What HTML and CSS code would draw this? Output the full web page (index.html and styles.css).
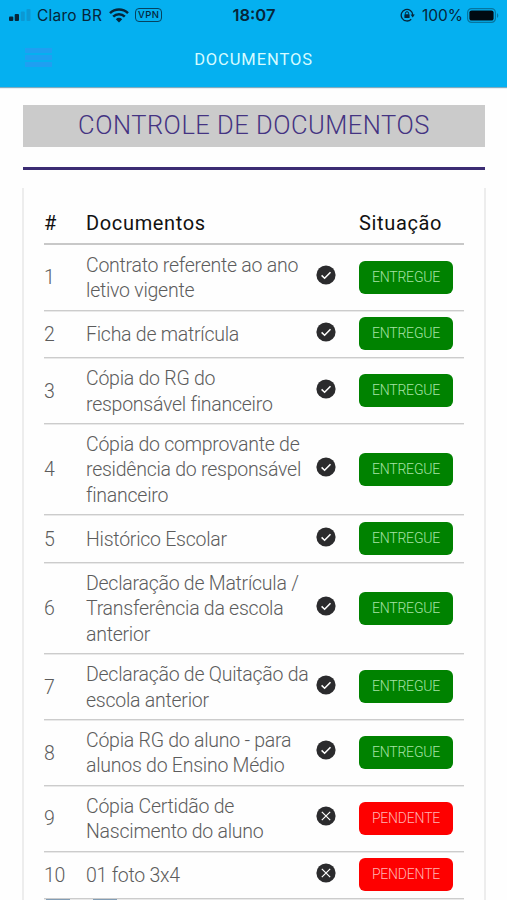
FILE: index.html
```html
<!DOCTYPE html>
<html lang="pt-BR">
<head>
    <meta charset="UTF-8">
    <meta name="viewport" content="width=device-width, initial-scale=1.0">
    <title>Documentos</title>
    <link rel="stylesheet" href="styles.css">
</head>
<body>
    <svg class="sprite" width="0" height="0">
        <symbol id="check" viewBox="0 0 20 20">
            <circle cx="10" cy="10" r="9.6" fill="#2b2b2d"/>
            <path d="M5.6 10.4l3 2.9 5.9-6.1" fill="none" stroke="#fff" stroke-width="1.5"/>
        </symbol>
        <symbol id="close" viewBox="0 0 20 20">
            <circle cx="10" cy="10" r="9.6" fill="#2b2b2d"/>
            <path d="M5.8 5.8l8.4 8.4M14.2 5.8l-8.4 8.4" fill="none" stroke="#fff" stroke-width="1.2"/>
        </symbol>
    </svg>

    <header class="topbar">
        <div class="status-bar">
            <div class="status-left">
                <svg class="signal" width="23" height="12" viewBox="0 0 23 12">
                    <rect x="0" y="7.5" width="4.3" height="4.5" rx="1" fill="#06263a"/>
                    <rect x="5.7" y="5" width="4.3" height="7" rx="1" fill="#06263a"/>
                    <rect x="11.8" y="2.5" width="4" height="9.5" rx="1" fill="#0c98d3"/>
                    <rect x="17.5" y="0" width="4" height="12" rx="1" fill="#0c98d3"/>
                </svg>
                <span class="carrier">Claro BR</span>
                <svg class="wifi" width="20" height="15" viewBox="0 0 20 15">
                    <g fill="none" stroke="#06263a" stroke-width="2.5">
                        <path d="M1 5.2a13 13 0 0 1 18 0"/>
                        <path d="M4.2 8.7a8.3 8.3 0 0 1 11.6 0"/>
                    </g>
                    <path d="M6.8 11.2a4.7 4.7 0 0 1 6.4 0L10 14.6z" fill="#06263a"/>
                </svg>
                <span class="vpn">VPN</span>
            </div>
            <div class="clock">18:07</div>
            <div class="status-right">
                <svg class="lock" width="15" height="14" viewBox="0 0 15 14">
                    <path d="M11.2 11.2A5.8 5.8 0 1 1 12.8 7" fill="none" stroke="#06263a" stroke-width="1.3"/>
                    <path d="M10.6 6.6h4.2l-2.1 2.9z" fill="#06263a"/>
                    <rect x="4.4" y="6.2" width="5.2" height="3.8" rx=".6" fill="#06263a"/>
                    <path d="M5.4 6.5V5.3a1.6 1.6 0 0 1 3.2 0v1.2" fill="none" stroke="#06263a" stroke-width="1"/>
                </svg>
                <span class="percent">100%</span>
                <svg class="battery" width="32" height="15" viewBox="0 0 32 15">
                    <rect x=".6" y=".6" width="27.8" height="13.8" rx="4" fill="none" stroke="#07759f" stroke-width="1.2"/>
                    <rect x="2.4" y="2.4" width="24.2" height="10.2" rx="2.2" fill="#000a12"/>
                    <path d="M30 5.2c1.7.6 1.7 4 0 4.6z" fill="#07759f"/>
                </svg>
            </div>
        </div>
        <div class="navbar">
            <div class="menu-btn"><span></span><span></span><span></span></div>
            <div class="nav-title">DOCUMENTOS</div>
        </div>
    </header>

    <main class="content">
        <h1 class="page-title"><span>CONTROLE DE DOCUMENTOS</span></h1>
        <div class="divider"></div>

        <section class="card">
            <div class="row head">
                <span class="num">#</span>
                <span class="name">Documentos</span>
                <span class="situation">Situação</span>
            </div>
            <div class="row">
                <span class="num">1</span>
                <span class="name">Contrato referente ao ano<br>letivo vigente</span>
                <svg class="icon"><use href="#check"/></svg>
                <span class="badge delivered">ENTREGUE</span>
            </div>
            <div class="row">
                <span class="num">2</span>
                <span class="name">Ficha de matrícula</span>
                <svg class="icon"><use href="#check"/></svg>
                <span class="badge delivered">ENTREGUE</span>
            </div>
            <div class="row">
                <span class="num">3</span>
                <span class="name">Cópia do RG do<br>responsável financeiro</span>
                <svg class="icon"><use href="#check"/></svg>
                <span class="badge delivered">ENTREGUE</span>
            </div>
            <div class="row">
                <span class="num">4</span>
                <span class="name">Cópia do comprovante de<br>residência do responsável<br>financeiro</span>
                <svg class="icon"><use href="#check"/></svg>
                <span class="badge delivered">ENTREGUE</span>
            </div>
            <div class="row">
                <span class="num">5</span>
                <span class="name">Histórico Escolar</span>
                <svg class="icon"><use href="#check"/></svg>
                <span class="badge delivered">ENTREGUE</span>
            </div>
            <div class="row">
                <span class="num">6</span>
                <span class="name">Declaração de Matrícula /<br>Transferência da escola<br>anterior</span>
                <svg class="icon"><use href="#check"/></svg>
                <span class="badge delivered">ENTREGUE</span>
            </div>
            <div class="row">
                <span class="num">7</span>
                <span class="name">Declaração de Quitação da<br>escola anterior</span>
                <svg class="icon"><use href="#check"/></svg>
                <span class="badge delivered">ENTREGUE</span>
            </div>
            <div class="row">
                <span class="num">8</span>
                <span class="name">Cópia RG do aluno - para<br>alunos do Ensino Médio</span>
                <svg class="icon"><use href="#check"/></svg>
                <span class="badge delivered">ENTREGUE</span>
            </div>
            <div class="row">
                <span class="num">9</span>
                <span class="name">Cópia Certidão de<br>Nascimento do aluno</span>
                <svg class="icon"><use href="#close"/></svg>
                <span class="badge pending">PENDENTE</span>
            </div>
            <div class="row">
                <span class="num">10</span>
                <span class="name">01 foto 3x4</span>
                <svg class="icon"><use href="#close"/></svg>
                <span class="badge pending">PENDENTE</span>
            </div>
            <div class="next-row"><span></span><span></span></div>
        </section>
    </main>
</body>
</html>
```
FILE: styles.css
```css
* {
    box-sizing: border-box;
}

body {
    margin: 0;
    height: 900px;
    overflow: hidden;
    background: #fefefe;
    font-family: Roboto, sans-serif;
    color: #5c5c5c;
}

.sprite {
    display: block;
}

.topbar {
    height: 87px;
    background: #05b0f0;
    box-shadow: 0 1px 1px rgba(0, 90, 130, 0.5);
}

.status-bar {
    display: grid;
    grid-template-columns: 1fr auto 1fr;
    align-items: center;
    height: 30px;
    padding: 0 8px 0 9px;
    font-family: Inter, sans-serif;
    font-size: 15.5px;
    color: #06263a;
}

.status-left,
.status-right {
    display: flex;
    align-items: center;
}

.status-right {
    justify-content: flex-end;
}

.carrier {
    margin-left: 5px;
    letter-spacing: 0.25px;
    white-space: nowrap;
}

.wifi {
    margin-left: 7px;
}

.vpn {
    width: 27px;
    height: 14px;
    margin-left: 6px;
    border: 1.3px solid #06425f;
    border-radius: 4px;
    font-size: 9.5px;
    font-weight: 500;
    line-height: 12px;
    letter-spacing: 0.4px;
    text-align: center;
}

.clock {
    font-size: 16.5px;
    font-weight: 600;
}

.percent {
    margin: 0 4px 0 7px;
}

.navbar {
    display: grid;
    grid-template-columns: 1fr auto 1fr;
    align-items: center;
    height: 57px;
    padding-left: 25px;
}

.menu-btn {
    display: flex;
    flex-direction: column;
    gap: 2px;
    width: 27px;
    margin-top: -2px;
}

.menu-btn span {
    height: 5px;
    background: #1f9ff1;
}

.nav-title {
    margin: 1px 25px 0 0;
    font-size: 16.5px;
    letter-spacing: 0.9px;
    color: #d5fbff;
}

.content {
    padding: 18px 22px 0 23px;
}

.page-title {
    margin: 0;
    height: 42px;
    background: #cbcbcb;
    font-size: 25.5px;
    font-weight: 350;
    line-height: 41px;
    letter-spacing: 0.5px;
    text-align: center;
    white-space: nowrap;
    color: #443382;
}

.divider {
    height: 3px;
    margin: 20px 0 18px;
    background: #3b2c73;
}

.card {
    height: 720px;
    padding: 15px 20px 0;
    margin: 0 -1px;
    border: solid #ededed;
    border-width: 0 2px;
}

.row {
    display: grid;
    grid-template-columns: 42px 222px 51px 1fr;
    align-items: center;
    padding: 7.7px 0 5.9px;
    border-bottom: 1px solid #ccc;
    box-shadow: 0 1px 0 #e9e9e9;
    font-size: 19.5px;
    font-weight: 300;
    line-height: 25.6px;
}

.num,
.name {
    white-space: nowrap;
    letter-spacing: -0.25px;
}

.icon {
    display: block;
    width: 20px;
    height: 20px;
    margin: -6px 0 0 8px;
}

.badge {
    width: 94px;
    height: 33px;
    margin: -1px 0 1px;
    border-radius: 6px;
    font-size: 14px;
    line-height: 32px;
    letter-spacing: -0.2px;
    text-align: center;
}

.delivered {
    background: #008200;
    color: #a6e3a6;
}

.pending {
    background: #fe0000;
    color: #ffb4b4;
}

.head {
    height: 42px;
    padding: 1px 0 0;
    border-bottom: 2px solid #c8c8c8;
    box-shadow: none;
    font-size: 20px;
    font-weight: 400;
    color: #111;
}

.head .name,
.situation {
    letter-spacing: 0.65px;
}

.situation {
    grid-column: 4;
}

/* top edge of the row that follows, cut by the screen */
.next-row {
    display: flex;
    gap: 23px;
    padding-left: 2px;
}

.next-row span {
    width: 24px;
    height: 2px;
    background: #829db5;
}
```
